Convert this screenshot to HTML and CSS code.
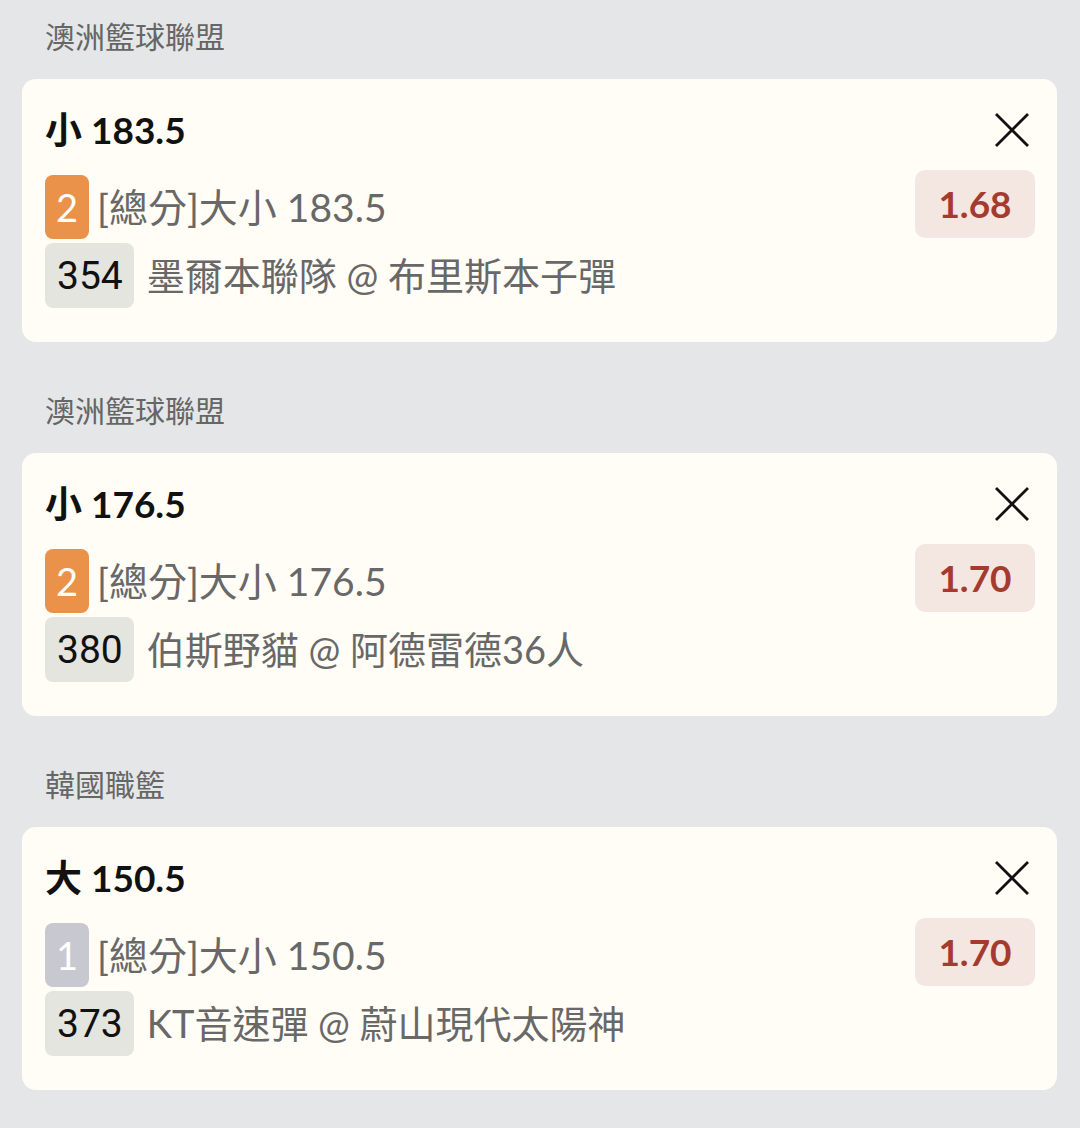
FILE: index.html
```html
<!DOCTYPE html>
<html lang="zh-Hant">
<head>
    <meta charset="UTF-8">
    <meta name="viewport" content="width=device-width, initial-scale=1.0">
    <title>投注單</title>
    <link rel="stylesheet" href="styles.css">
</head>
<body>
    <div class="slip">
        <div class="section">
            <div class="league">澳洲籃球聯盟</div>
            <div class="card">
                <div class="info">
                    <div class="pick">小 183.5</div>
                    <div class="row">
                        <span class="level level-2">2</span>
                        <span class="market">[總分]大小 183.5</span>
                    </div>
                    <div class="row">
                        <span class="code">354</span>
                        <span class="match">墨爾本聯隊 @ 布里斯本子彈</span>
                    </div>
                </div>
                <div class="side">
                    <button class="close" type="button" aria-label="移除">
                        <svg viewBox="0 0 36 36" width="36" height="36"><path d="M2 2 L34 34 M34 2 L2 34" stroke="#111" stroke-width="2.8" fill="none"/></svg>
                    </button>
                    <div class="odds">1.68</div>
                </div>
            </div>
        </div>

        <div class="section">
            <div class="league">澳洲籃球聯盟</div>
            <div class="card">
                <div class="info">
                    <div class="pick">小 176.5</div>
                    <div class="row">
                        <span class="level level-2">2</span>
                        <span class="market">[總分]大小 176.5</span>
                    </div>
                    <div class="row">
                        <span class="code">380</span>
                        <span class="match">伯斯野貓 @ 阿德雷德36人</span>
                    </div>
                </div>
                <div class="side">
                    <button class="close" type="button" aria-label="移除">
                        <svg viewBox="0 0 36 36" width="36" height="36"><path d="M2 2 L34 34 M34 2 L2 34" stroke="#111" stroke-width="2.8" fill="none"/></svg>
                    </button>
                    <div class="odds">1.70</div>
                </div>
            </div>
        </div>

        <div class="section">
            <div class="league">韓國職籃</div>
            <div class="card">
                <div class="info">
                    <div class="pick">大 150.5</div>
                    <div class="row">
                        <span class="level level-1">1</span>
                        <span class="market">[總分]大小 150.5</span>
                    </div>
                    <div class="row">
                        <span class="code">373</span>
                        <span class="match">KT音速彈 @ 蔚山現代太陽神</span>
                    </div>
                </div>
                <div class="side">
                    <button class="close" type="button" aria-label="移除">
                        <svg viewBox="0 0 36 36" width="36" height="36"><path d="M2 2 L34 34 M34 2 L2 34" stroke="#111" stroke-width="2.8" fill="none"/></svg>
                    </button>
                    <div class="odds">1.70</div>
                </div>
            </div>
        </div>
    </div>
</body>
</html>
```

FILE: styles.css
```css
body {
    margin: 0;
    background-color: #e5e6e8;
    font-family: Lato, "Noto Sans CJK TC", sans-serif;
}

.slip {
    padding: 18px 23px 0 22px;
}

.section + .section {
    margin-top: 50px;
}

.league {
    height: 36px;
    line-height: 36px;
    margin: 0 0 25px 23px;
    font-size: 30px;
    color: #666;
}

.card {
    display: flex;
    padding: 23px 22px 34px 23px;
    background-color: #fffdf6;
    border-radius: 14px;
}

.info {
    flex: 1;
}

.pick {
    height: 56px;
    line-height: 56px;
    margin-bottom: 17px;
    font-size: 37px;
    font-weight: bold;
    color: #111;
}

.row {
    display: flex;
    align-items: center;
    height: 64px;
}

.row + .row {
    height: 65px;
    margin-top: 4px;
}

.level {
    width: 44px;
    height: 64px;
    line-height: 64px;
    text-align: center;
    border-radius: 8px;
    color: #fff;
    font-size: 38px;
}

.level-2 {
    background-color: #ea9249;
}

.level-1 {
    background-color: #c8c8d0;
}

.code {
    height: 65px;
    line-height: 67px;
    padding: 0 11px 0 12px;
    border-radius: 8px;
    background-color: #e5e5e0;
    font-family: Roboto, sans-serif;
    font-size: 39px;
    color: #111;
}

.market,
.match {
    line-height: 1.2;
    color: #686868;
    white-space: nowrap;
}

.market {
    margin-left: 8px;
    font-size: 39px;
}

.match {
    margin-left: 13px;
    font-size: 38px;
}

.side {
    display: flex;
    flex-direction: column;
    align-items: flex-end;
}

.close {
    width: 36px;
    height: 36px;
    margin: 10px 5px 0 0;
    padding: 0;
    border: none;
    background: none;
    cursor: pointer;
}

.close svg {
    display: block;
}

.odds {
    width: 120px;
    height: 68px;
    line-height: 68px;
    margin-top: 22px;
    text-align: center;
    border-radius: 10px;
    background-color: #f4e6e0;
    color: #a53a2f;
    font-size: 37px;
    font-weight: bold;
}
```
